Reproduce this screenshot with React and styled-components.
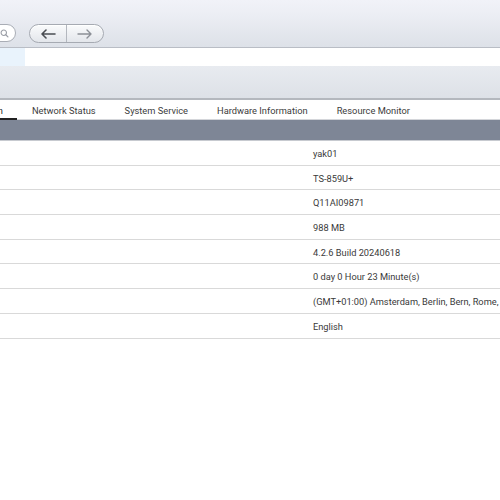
import React from 'react'
import styled, { createGlobalStyle } from 'styled-components'

const GlobalStyle = createGlobalStyle`
  html, body {
    margin: 0;
    padding: 0;
    background: #fff;
    overflow: hidden;
  }
  body {
    width: 500px;
    height: 500px;
    font-family: Roboto, 'Liberation Sans', sans-serif;
  }
`

const tabs = [
  'System Information',
  'Network Status',
  'System Service',
  'Hardware Information',
  'Resource Monitor',
]

const rows = [
  ['Server Name', 'yak01'],
  ['Model Name', 'TS-859U+'],
  ['Serial Number', 'Q11AI09871'],
  ['Total Memory', '988 MB'],
  ['Firmware Version', '4.2.6 Build 20240618'],
  ['System Up Time', '0 day 0 Hour 23 Minute(s)'],
  ['Time Zone', '(GMT+01:00) Amsterdam, Berlin, Bern, Rome, Stockholm, Vienna'],
  ['Filename Encoding', 'English'],
]

const SearchIcon = () => (
  <svg width='9' height='9' viewBox='0 0 10 10'>
    <circle cx='4.2' cy='4.2' r='3' fill='none' stroke='#9a9ea6' strokeWidth='1.2' />
    <line x1='6.4' y1='6.4' x2='8.8' y2='8.8' stroke='#9a9ea6' strokeWidth='1.4' strokeLinecap='round' />
  </svg>
)

const Arrow = ({ dir, color }) => (
  <svg width='16' height='10' viewBox='0 0 16 10'>
    {dir === 'left' ? (
      <path d='M15 5H2M6 1L2 5l4 4' fill='none' stroke={color} strokeWidth='1.6' strokeLinecap='round' strokeLinejoin='round' />
    ) : (
      <path d='M1 5h13M10 1l4 4-4 4' fill='none' stroke={color} strokeWidth='1.4' strokeLinecap='round' strokeLinejoin='round' />
    )}
  </svg>
)

const App = () => {
  return (
    <Page>
      <GlobalStyle />
      <Toolbar>
        <Search>
          <SearchIcon />
        </Search>
        <NavGroup>
          <NavButton>
            <Arrow dir='left' color='#4a4d53' />
          </NavButton>
          <NavButton>
            <Arrow dir='right' color='#8c9097' />
          </NavButton>
        </NavGroup>
      </Toolbar>
      <AddressStrip>
        <Crumb />
      </AddressStrip>
      <Subbar />
      <TabBar>
        {tabs.map((t, i) => (
          <Tab key={t} $active={i === 0}>
            {t}
          </Tab>
        ))}
      </TabBar>
      <HeaderBar />
      <Table>
        {rows.map(([label, value]) => (
          <Row key={label}>
            <Label>{label}</Label>
            <Value>{value}</Value>
          </Row>
        ))}
      </Table>
    </Page>
  )
}

const Page = styled.div`
  width: 500px;
  height: 500px;
  overflow: hidden;
  background: #fff;
  color: #3a3a3a;
`
const Toolbar = styled.div`
  height: 48px;
  box-sizing: border-box;
  padding-top: 24px;
  display: flex;
  align-items: flex-start;
  gap: 13px;
  background: linear-gradient(#f1f2f8 0%, #eceef4 30%, #dde1e8 100%);
  border-bottom: 1.5px solid #b9bdc5;
`
const Search = styled.div`
  width: 60px;
  margin-left: -44px;
  height: 18px;
  box-sizing: border-box;
  border: 1px solid #a9adb5;
  border-radius: 9px;
  background: #fff;
  display: flex;
  align-items: center;
  justify-content: flex-end;
  padding-right: 6px;
`
const NavGroup = styled.div`
  display: flex;
  height: 19px;
  box-sizing: border-box;
  border: 1px solid #a6aab2;
  border-radius: 10px;
  overflow: hidden;
  background: linear-gradient(#fafbfc, #e3e6eb);
  box-shadow: inset 0 1px 0 #fff;
`
const NavButton = styled.div`
  width: 36px;
  display: flex;
  align-items: center;
  justify-content: center;
  & + & {
    border-left: 1px solid #b3b7be;
  }
`
const AddressStrip = styled.div`
  height: 18px;
  background: #fff;
  display: flex;
`
const Crumb = styled.div`
  width: 25px;
  background: #e9f3fc;
`
const Subbar = styled.div`
  height: 32px;
  background: linear-gradient(#e8ebf0, #dde1e7);
  border-bottom: 2px solid #b4b8be;
`
const TabBar = styled.div`
  height: 20px;
  box-sizing: border-box;
  display: flex;
  background: #fff;
  border-bottom: 1px solid #d4d6da;
  margin-left: -93px;
`
const Tab = styled.div`
  font-size: 9.3px;
  line-height: 18px;
  padding: 2px 14.5px 0;
  height: 20px;
  color: ${(p) => (p.$active ? '#2a2a2a' : '#3c3c3c')};
  white-space: nowrap;
  box-sizing: border-box;
  border-bottom: 2px solid ${(p) => (p.$active ? '#222' : 'transparent')};
`
const HeaderBar = styled.div`
  height: 21px;
  box-sizing: border-box;
  background: #7e8696;
  border-bottom: 1px solid #c7cad0;
`
const Table = styled.div`
  display: flex;
  flex-direction: column;
`
const Row = styled.div`
  height: 24.7px;
  box-sizing: border-box;
  display: grid;
  grid-template-columns: 313px 1fr;
  align-items: center;
  padding-top: 1px;
  border-bottom: 1.5px solid #d9d9d9;
  font-size: 9.25px;
  white-space: nowrap;
  overflow: hidden;
`
const Label = styled.div`
  visibility: hidden;
`
const Value = styled.div`
  color: #3a3a3a;
`

export default App
